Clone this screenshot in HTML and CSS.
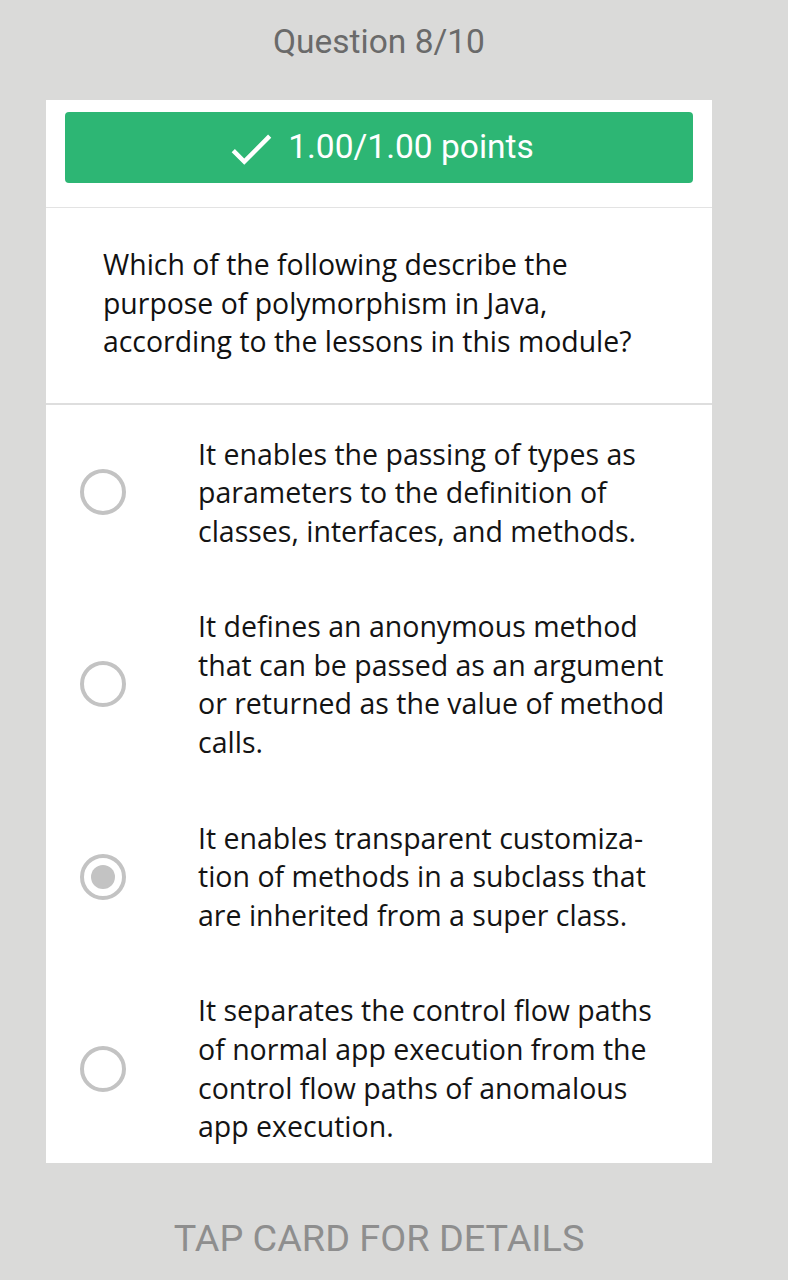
FILE: index.html
```html
<!DOCTYPE html>
<html lang="en">
<head>
<meta charset="utf-8">
<title>Question 8/10</title>
<link rel="stylesheet" href="styles.css">
</head>
<body>
<main class="page">
  <h1 class="counter">Question 8/10</h1>
  <section class="card">
    <div class="score-wrap">
      <div class="score">
        <svg class="check" viewBox="0 0 24 24" aria-hidden="true"><path d="M9 16.17L4.83 12l-1.42 1.41L9 19 21 7l-1.41-1.41z"/></svg>
        <span>1.00/1.00 points</span>
      </div>
    </div>
    <div class="question">
      <p>Which of the following describe the purpose of polymorphism in Java, according to the lessons in this module?</p>
    </div>
    <ul class="options">
      <li class="option">
        <span class="radio"></span>
        <p>It enables the passing of types as parameters to the definition of classes, interfaces, and methods.</p>
      </li>
      <li class="option">
        <span class="radio"></span>
        <p>It defines an anonymous method that can be passed as an argument or returned as the value of method calls.</p>
      </li>
      <li class="option">
        <span class="radio selected"></span>
        <p>It enables transparent customiza&shy;tion of methods in a subclass that are inherited from a super class.</p>
      </li>
      <li class="option">
        <span class="radio"></span>
        <p>It separates the control flow paths of normal app execution from the control flow paths of anomalous app execution.</p>
      </li>
    </ul>
  </section>
  <div class="tap">TAP CARD FOR DETAILS</div>
</main>
</body>
</html>
```
FILE: styles.css
```css
html, body {
  margin: 0;
  padding: 0;
  background: #dadad9;
}
body {
  width: 788px;
  height: 1280px;
  overflow: hidden;
}
.page {
  width: 666px;
  margin-left: 46px;
  display: flex;
  flex-direction: column;
}
.counter {
  margin: 0;
  height: 100px;
  display: flex;
  align-items: center;
  justify-content: center;
  padding-bottom: 18px;
  box-sizing: border-box;
  font-family: Roboto, "Liberation Sans", sans-serif;
  font-weight: 400;
  font-size: 33.5px;
  color: #6a6a6a;
}
.card {
  background: #fff;
  display: flex;
  flex-direction: column;
}
.score-wrap {
  padding: 12px 19px 24px;
  border-bottom: 1px solid #e3e3e3;
}
.score {
  height: 71px;
  background: #2db674;
  border-radius: 4px;
  display: flex;
  align-items: center;
  justify-content: center;
  gap: 10px;
  padding-bottom: 2px;
  box-sizing: border-box;
  color: #fff;
  font-family: Roboto, "Liberation Sans", sans-serif;
  font-size: 33.5px;
}
.check {
  width: 54px;
  height: 54px;
  margin-top: 4px;
  fill: #fff;
}
.question {
  padding: 37px 40px 42px 57px;
  border-bottom: 2px solid #dedede;
}
.question p {
  margin: 0;
  font-family: "Open Sans", "Noto Sans", sans-serif;
  font-size: 28.4px;
  line-height: 38.5px;
  color: #111;
}
.options {
  list-style: none;
  margin: 0;
  padding: 2px 0 0;
}
.option {
  display: flex;
  align-items: center;
  padding: 28px 40px 29px 34px;
}
.option:last-child {
  padding-bottom: 17px;
}
.option p {
  margin: 0 0 0 72px;
  font-family: "Open Sans", "Noto Sans", sans-serif;
  font-size: 28.5px;
  line-height: 38.6px;
  color: #141414;
  hyphens: manual;
}
.radio {
  flex: none;
  width: 38px;
  height: 38px;
  border: 4px solid #c3c3c3;
  border-radius: 50%;
  display: flex;
  align-items: center;
  justify-content: center;
}
.radio.selected::after {
  content: "";
  width: 24px;
  height: 24px;
  border-radius: 50%;
  background: #c3c3c3;
}
.tap {
  height: 150px;
  display: flex;
  align-items: center;
  justify-content: center;
  font-family: Roboto, "Liberation Sans", sans-serif;
  font-size: 37.8px;
  color: #8e8e8e;
}
```
